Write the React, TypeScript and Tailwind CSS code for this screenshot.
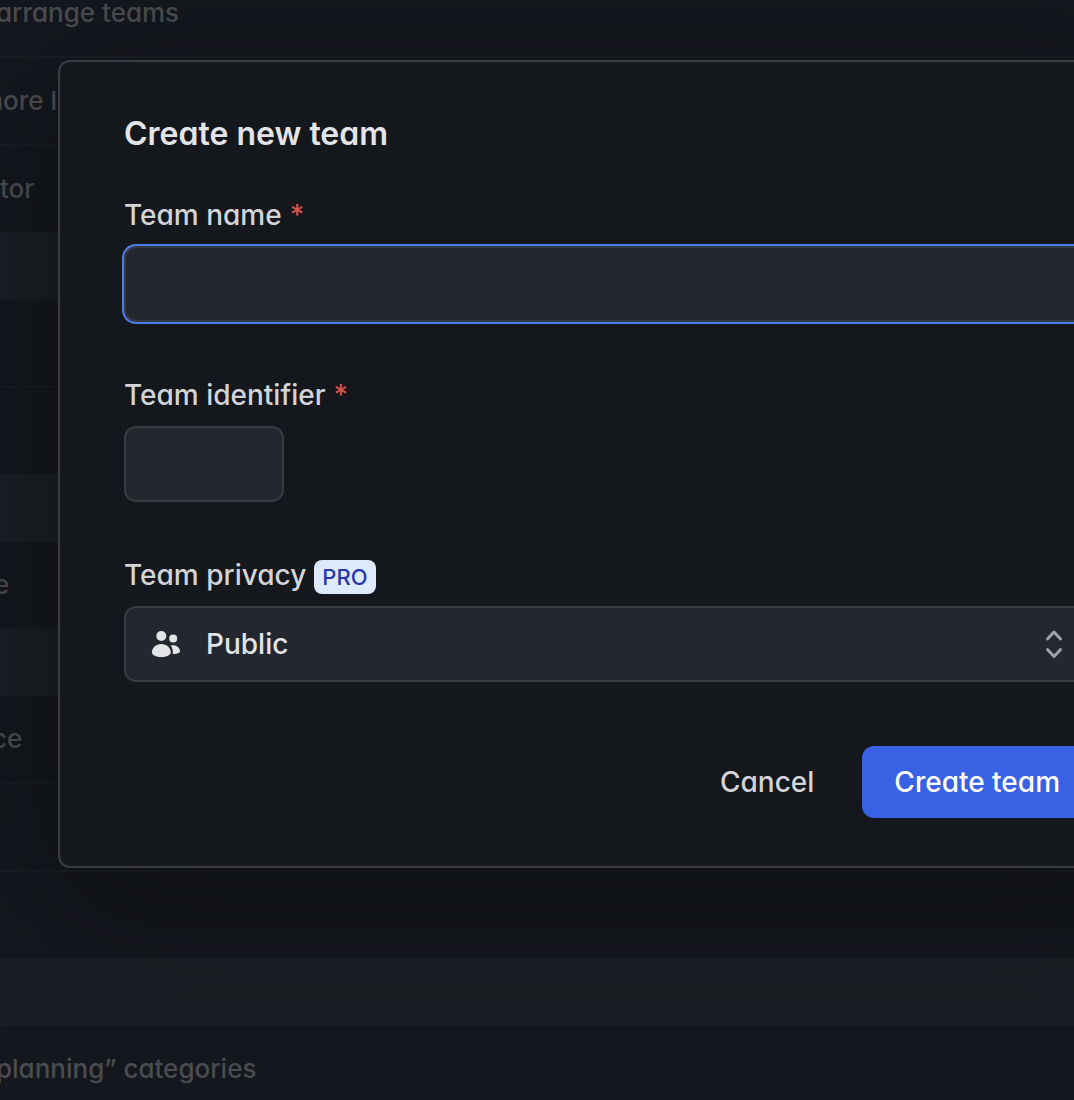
import React from "react";

type Row = { kind: "row" | "band"; text?: string; shift?: string; divider?: boolean };

const rows: Row[] = [
  { kind: "row", text: "arrange teams", shift: "-ml-1", divider: true },
  { kind: "row", text: "more l", shift: "-ml-5", divider: true },
  { kind: "row", text: "tor", shift: "ml-0" },
  { kind: "band" },
  { kind: "row", divider: true },
  { kind: "row" },
  { kind: "band" },
  { kind: "row", text: "e", shift: "-ml-1.5" },
  { kind: "band" },
  { kind: "row", text: "ce", shift: "-ml-2", divider: true },
  { kind: "row", divider: true },
  { kind: "row" },
  { kind: "band" },
  { kind: "row", text: "planning” categories", shift: "-ml-1" },
];

function Backlog() {
  return (
    <div className="-mt-[30px]">
      {rows.map((r, i) =>
        r.kind === "band" ? (
          <div key={i} className="h-[68px] bg-[#1b1e24]" />
        ) : (
          <div
            key={i}
            className={
              r.divider
                ? "flex h-[88px] items-center border-b-2 border-[#191c21]"
                : "flex h-[86px] items-center"
            }
          >
            {r.text && (
              <span className={`text-[26px] leading-8 font-medium whitespace-nowrap text-[#4a4c50] ${r.shift}`}>
                {r.text}
              </span>
            )}
          </div>
        )
      )}
    </div>
  );
}

function PeopleIcon() {
  return (
    <svg className="h-8 w-8" viewBox="0 0 32 32" fill="#e3e4e8" aria-hidden="true">
      <circle cx="11.3" cy="8" r="5" />
      <circle cx="23.2" cy="10.4" r="4" />
      <path d="M11.3 16c-5.400 0-9.400 4-9.400 8.200 0 2.800 4.200 4.800 9.400 4.800s9.400-2 9.400-4.800c0-4.200-4-8.200-9.400-8.200z" />
      <path d="M20.800 17.800c1-.5 2-.600 3-.5 3.500.300 6.300 3.300 6.300 5.900 0 1.500-3.100 2.900-7.200 2.800.200-3-.400-5.800-2.100-8.200z" />
    </svg>
  );
}

function SortIcon() {
  return (
    <svg
      className="h-8 w-6"
      viewBox="0 0 24 32"
      fill="none"
      stroke="#9fa1ae"
      strokeWidth="3"
      strokeLinecap="round"
      strokeLinejoin="round"
      aria-hidden="true"
    >
      <path d="M5.500 11 12 4l6.500 7M5.500 21.500l6.500 7 6.500-7" />
    </svg>
  );
}

const label = "flex h-9 items-center text-[28px] leading-9 font-[450] text-[#d3d4d8]";
const field = "h-[76px] rounded-xl border-2 border-[#393b41] bg-[#242730] text-[28px] font-[450] text-[#e3e4e8] outline-none";

function CreateTeamDialog() {
  return (
    <form
      role="dialog"
      aria-labelledby="dialog-title"
      onSubmit={(e) => e.preventDefault()}
      className="absolute top-[60px] left-[58px] -right-[84px] flex flex-col rounded-xl border-2 border-[#3a3c41] bg-[#14171b] px-16 pt-[52px] pb-12 shadow-[0_32px_140px_rgba(0,0,0,0.4)]"
    >
      <h1 id="dialog-title" className="text-[32px] leading-10 font-semibold text-[#e3e4e8]">
        Create new team
      </h1>

      <div className="mt-[43px] flex flex-col gap-[13px]">
        <label htmlFor="team-name" className={label}>
          Team name<span className="ml-2 text-[#d9534c]">*</span>
        </label>
        <input id="team-name" type="text" className={`${field} w-full px-6 ring-2 ring-[#4a7df0]`} />
      </div>

      <div className="mt-[55px] flex flex-col gap-[13px]">
        <label htmlFor="team-identifier" className={label}>
          Team identifier<span className="ml-2 text-[#d9534c]">*</span>
        </label>
        <input id="team-identifier" type="text" className={`${field} w-40 px-6`} />
      </div>

      <div className="mt-[55px] flex flex-col gap-[13px]">
        <label htmlFor="team-privacy" className={label}>
          Team privacy
          <span className="mt-1 ml-2 rounded-lg bg-[#dfe9fc] px-2 text-[22px] leading-[34px] text-[#2439ab]">PRO</span>
        </label>
        <div className="relative">
          <select id="team-privacy" defaultValue="public" className={`${field} w-full appearance-none pr-16 pl-20`}>
            <option value="public">Public</option>
            <option value="private">Private</option>
          </select>
          <span className="pointer-events-none absolute inset-y-0 left-[26px] flex items-center">
            <PeopleIcon />
          </span>
          <span className="pointer-events-none absolute inset-y-0 right-[26px] flex items-center">
            <SortIcon />
          </span>
        </div>
      </div>

      <div className="mt-16 flex justify-end gap-4">
        <button type="button" className="h-[72px] rounded-xl px-8 text-[28px] font-medium text-[#d3d4d8]">
          Cancel
        </button>
        <button type="submit" className="h-[72px] rounded-xl bg-[#3862e3] px-8 text-[28px] font-medium text-white">
          Create team
        </button>
      </div>
    </form>
  );
}

export default function App() {
  return (
    <main className="relative h-screen overflow-hidden bg-[#14171d] font-['Inter',sans-serif] [font-feature-settings:'cv11']">
      <Backlog />
      <CreateTeamDialog />
    </main>
  );
}
